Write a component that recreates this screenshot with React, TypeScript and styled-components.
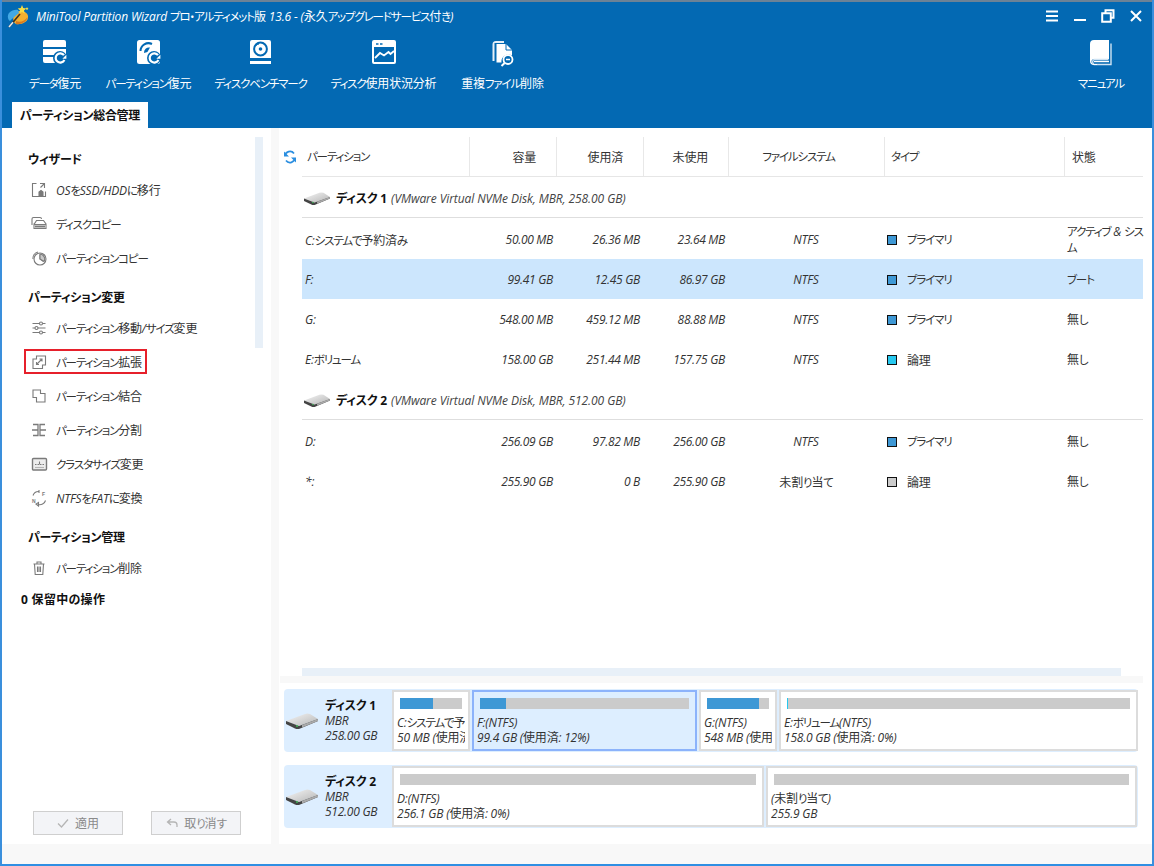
import React from "react";
import styled, { createGlobalStyle } from "styled-components";

const Global = createGlobalStyle`
  html, body { margin: 0; padding: 0; background: #fff; }
  * { box-sizing: border-box; }
  body {
    font-family: "Open Sans", "Noto Sans CJK JP", sans-serif;
    font-size: 12px;
    font-feature-settings: "palt";
    color: #222;
  }
`;

const Window = styled.div`
  width: 1154px; height: 866px; display: flex; flex-direction: column;
  border-left: 2px solid #3a8fdc; border-right: 2px solid #3a8fdc; border-bottom: 2px solid #2f8fe3;
  overflow: hidden; background: #fff;
`;
const Header = styled.header`
  height: 128px; background: #0369b3; color: #fff; display: flex; flex-direction: column;
  border-top: 2px solid #6c8296; flex: none;
`;
const TitleBar = styled.div`
  height: 28px; display: flex; align-items: center; padding: 0 9px 0 5px; gap: 7px;
`;
const TitleText = styled.span`flex: 1; letter-spacing: -0.15px;`;
const Controls = styled.div`display: flex; gap: 14px; align-items: center;`;
const Toolbar = styled.div`
  height: 72px; display: flex; padding-left: 26px; gap: 24px; align-items: flex-start;
`;
const Tool = styled.div<{ $w: number; $push?: boolean }>`
  width: ${p => p.$w}px; flex: none; display: flex; flex-direction: column; align-items: center;
  padding-top: 10px; white-space: nowrap;
  ${p => p.$push ? "margin-left: auto; margin-right: 28px;" : ""}
`;
const ToolIcon = styled.div`height: 27px; display: flex; align-items: flex-start; justify-content: center;`;
const ToolLabel = styled.span`line-height: 16px; margin-top: 9px; letter-spacing: -0.2px;`;
const TabStrip = styled.div`flex: 1; padding-left: 10px; display: flex; align-items: flex-end;`;
const Tab = styled.div`
  width: 136px; height: 26px; background: #fff; color: #111; font-weight: 700;
  display: flex; align-items: center; justify-content: center; letter-spacing: -0.3px;
`;

const Body = styled.div`flex: 1; display: flex; min-height: 0;`;
const Sidebar = styled.aside`
  width: 269px; flex: none; position: relative; display: flex; flex-direction: column;
  padding: 17px 0 9px;
`;
const SideScroll = styled.div`
  position: absolute; left: 253px; top: 9px; width: 8px; height: 211px; background: #e8f0f8;
`;
const SideHeading = styled.div`
  height: 28px; margin-left: 26px; display: flex; align-items: center; font-weight: 700; color: #111;
  letter-spacing: -0.3px;
  & ~ & { margin-top: 8px; }
`;
const SideItem = styled.div`
  height: 34px; display: flex; align-items: center; padding-left: 28px; gap: 8px;
  color: #333; letter-spacing: -0.2px; position: relative;
`;
const Highlight = styled.div`
  position: absolute; left: 22px; top: 4px; width: 123px; height: 25px; border: 2px solid #e6202b;
`;
const Pending = styled.div`
  height: 28px; margin-left: 19px; display: flex; align-items: center; font-weight: 700; color: #111;
  letter-spacing: 0.3px;
`;
const Actions = styled.div`margin-top: auto; display: flex; gap: 28px; padding-left: 31px;`;
const ActionButton = styled.div`
  width: 90px; height: 24px; background: #f3f4f7; border: 1px solid #cfcfcf; color: #8a8a8a;
  display: flex; align-items: center; justify-content: center; gap: 6px;
`;
const Gutter = styled.div`width: 8px; flex: none; background: #f8f8f8;`;

const Panel = styled.main`flex: 1; display: flex; flex-direction: column; padding-top: 9px; min-width: 0;`;
const HeadRow = styled.div`display: flex; height: 40px; flex: none;`;
const RefreshCell = styled.div`width: 23px; display: flex; align-items: center; padding-left: 4px; flex: none;`;
const COLS = "167px 87px 87px 85px 156px 180px 79px";
const HeadGrid = styled.div`
  display: grid; grid-template-columns: 168px 87px 87px 85px 156px 180px 78px; width: 841px;
  border-bottom: 1px solid #e6e6e6;
`;
const HeadCell = styled.div<{ $align?: string; $pad?: string; $last?: boolean }>`
  display: flex; align-items: center; justify-content: ${p => p.$align || "flex-start"};
  padding: ${p => p.$pad || "0"};
  border-right: ${p => p.$last ? "none" : "1px solid #e8e8e8"}; color: #333; letter-spacing: -0.2px;
`;
const Rows = styled.div`margin-left: 23px; width: 841px; flex: 1;`;
const DiskRow = styled.div`
  height: 41px; display: flex; align-items: center; padding: 2px 0 0 2px; gap: 6px;
  border-bottom: 1px solid #dedede;
`;
const DiskName = styled.b`color: #111; letter-spacing: -0.2px;`;
const DiskInfo = styled.i`color: #444; letter-spacing: -0.08px; margin-left: 1px;`;
const Row = styled.div<{ $sel?: boolean; $first?: boolean }>`
  height: 40px; display: grid; grid-template-columns: ${COLS}; align-items: center;
  background: ${p => p.$sel ? "#cce6fd" : "transparent"};
  margin-top: ${p => p.$first ? "1px" : "0"};
`;
const NameCell = styled.div`padding: 1px 0 0 3px; color: #333; letter-spacing: -0.2px;`;
const NumCell = styled.div`padding-top: 1px; text-align: right; padding-right: 3px; font-style: italic; color: #333; letter-spacing: -0.3px;`;
const FsCell = styled.div`padding-top: 1px; text-align: center; color: #333; letter-spacing: -0.2px;`;
const TypeCell = styled.div`padding-top: 1px; display: flex; align-items: center; gap: 10px; padding-left: 3px; color: #333; letter-spacing: -0.2px;`;
const Swatch = styled.span<{ $c: string }>`
  width: 10px; height: 10px; background: ${p => p.$c}; border: 1px solid #111; flex: none;
`;
const StatusCell = styled.div`
  padding: 1px 0 0 3px; line-height: 16px; color: #333; letter-spacing: -0.2px; width: 79px;
  white-space: pre-line;
`;

const HScroll = styled.div`height: 8px; margin-left: 23px; width: 819px; background: #e8f0f8; flex: none;`;
const Band = styled.div`height: 7px; margin-left: 1px; width: 863px; background: #f8f8f8; flex: none;`;
const DiskMap = styled.div`
  display: flex; flex-direction: column; gap: 13px; padding: 6px 0 16px 5px; flex: none;
`;
const MapRow = styled.div`
  width: 854px; height: 63px; display: flex; background: #ddeeff; border-radius: 4px; padding: 1px 0;
  gap: 2px;
`;
const MapLabel = styled.div`
  width: 108px; margin-right: -2px; display: flex; align-items: center; flex: none; padding-left: 2px; gap: 7px;
`;
const MapText = styled.div`display: flex; flex-direction: column; line-height: 15px;`;
const MapItalic = styled.i`color: #333; letter-spacing: -0.25px;`;
const Part = styled.div<{ $w: number; $sel?: boolean }>`
  width: ${p => p.$w}px; flex: none; background: ${p => p.$sel ? "#ddeeff" : "#fff"};
  border: 2px solid ${p => p.$sel ? "#8cb3fb" : "#dcdcdc"}; padding: 6px 3px 0; overflow: hidden;
`;
const Bar = styled.div`height: 11px; margin: 0 3px 6px; background: #cbcbcb; display: flex;`;
const Used = styled.div<{ $c?: string }>`background: ${p => p.$c || "#3e98d5"};`;
const PartLine = styled.div`
  line-height: 15px; white-space: nowrap; overflow: hidden; color: #333; letter-spacing: -0.2px;
`;
const BottomBand = styled.div`height: 20px; background: #f8f8f8; flex: none;`;

const Ico = styled.svg`flex: none; display: block;`;
const Kana = styled.span`font-size: 11.5px; letter-spacing: -1.15px;`;
const Latin = styled.i``;

const JText = ({ children }: { children: string }) => (
  <>
    {children.split(/([\u3040-\u30ff]+|[\x21-\x7e]+(?: [\x21-\x7e]+)*)/).filter(Boolean).map((s, i) =>
      /^[\u3040-\u30ff]/.test(s) ? <Kana key={i}>{s}</Kana>
        : /^[\x21-\x7e]/.test(s) ? <Latin key={i}>{s}</Latin>
        : <span key={i}>{s}</span>
    )}
  </>
);

const Logo = () => (
  <Ico width="22" height="24" viewBox="0 0 22 24">
    <path d="M8 8 C13 6 20 7 21 12 C22 18 14 21 9 20 C6 19 5 12 8 8Z" fill="#f4b02f" />
    <path d="M9 17 C13 19 18 17 20.500 13 C20 18 13 21 9 20z" fill="#d9791f" />
    <path d="M1 14 C0 9 5 5 11 6 L12 9 C8 12 5 15 3 17 C2 16.500 1.300 15.500 1 14Z" fill="#42a8e4" />
    <path d="M2 23 L13 10" stroke="#40301c" strokeWidth="1.600" />
    <path d="M2 23 L6 18.300" stroke="#e8e8e8" strokeWidth="1.600" />
    <path d="M15 1l1.200 3 3.100.4-2.300 2 .7 3.100-2.700-1.600-2.700 1.600.7-3.100-2.300-2 3.100-.4z" fill="#f7dc45" />
    <path d="M20 3l.5 1 1 .3-.8.7.2 1-.9-.5-.9.5.2-1-.8-.7 1-.3z" fill="#f7dc45" />
  </Ico>
);

const CtlMenu = () => <Ico width="14" height="12" viewBox="0 0 14 12"><path d="M1 1.500h12M1 6h12M1 10.500h12" stroke="#fff" strokeWidth="2" /></Ico>;
const CtlMin = () => <Ico width="14" height="12" viewBox="0 0 14 12"><path d="M1 10h12" stroke="#fff" strokeWidth="2" /></Ico>;
const CtlMax = () => <Ico width="14" height="14" viewBox="0 0 14 14"><path d="M4.500 3.500V1.200h8v7.600h-2.400M1.200 4.200h8.600v8.600H1.200z" fill="none" stroke="#fff" strokeWidth="2" /></Ico>;
const CtlClose = () => <Ico width="14" height="14" viewBox="0 0 14 14"><path d="M2 2l10 10M12 2L2 12" stroke="#fff" strokeWidth="2" /></Ico>;

const Recover = ({ x, y }: { x: number; y: number }) => (
  <g transform={`translate(${x} ${y})`}>
    <circle r="7" fill="#0369b3" />
    <path d="M4 -2.800 A4.600 4.600 0 1 0 4.400 2" fill="none" stroke="#fff" strokeWidth="2.200" />
    <path d="M6.400 -3.200v4h-4z" fill="#fff" />
  </g>
);
const ToolData = () => (
  <Ico width="24" height="25" viewBox="0 0 24 25">
    <path d="M2 0h19a2 2 0 0 1 2 2v5H0V2a2 2 0 0 1 2-2zM0 9h23v6H0zM0 17h14v6H2a2 2 0 0 1-2-2z" fill="#fff" />
    <Recover x={17} y={18} />
  </Ico>
);
const ToolPart = () => (
  <Ico width="24" height="25" viewBox="0 0 24 25">
    <rect x="0" y="0" width="23" height="24" rx="2.500" fill="#fff" />
    <path d="M3.500 11 A8 8 0 0 1 15 4" fill="none" stroke="#0369b3" strokeWidth="2" />
    <path d="M7 13 A5 5 0 0 1 13 7.600 L10.400 12z" fill="#0369b3" />
    <Recover x={17} y={18} />
  </Ico>
);
const ToolBench = () => (
  <Ico width="24" height="25" viewBox="0 0 24 25">
    <path d="M3 0h17a2 2 0 0 1 2 2v16H1V2a2 2 0 0 1 2-2zM1 21h21v3H1z" fill="#fff" />
    <circle cx="11.500" cy="9" r="6.400" fill="none" stroke="#0369b3" strokeWidth="2" />
    <circle cx="11.500" cy="9" r="1.800" fill="#0369b3" />
    <path d="M7 5.500 A5 5 0 0 1 10 4" stroke="#0369b3" strokeWidth="1" fill="none" />
  </Ico>
);
const ToolUsage = () => (
  <Ico width="24" height="24" viewBox="0 0 24 24">
    <rect x="1" y="1" width="22" height="22" rx="1" fill="none" stroke="#fff" strokeWidth="2" />
    <path d="M1 1h22v6H1z" fill="#fff" />
    <path d="M4 4h2.500M8 4h2.500" stroke="#0369b3" strokeWidth="1.600" />
    <path d="M3 18 L8 13 L12 15.500 L16.500 12 L18.500 14 L22 11" fill="none" stroke="#fff" strokeWidth="1.800" />
  </Ico>
);
const ToolDup = () => (
  <Ico width="24" height="27" viewBox="0 0 24 27">
    <path d="M3.500 3V21H1.500V4.500A3.500 3.500 0 0 1 5 1H13V3z" fill="#fff" opacity=".9" />
    <path d="M5.500 4h9.500l6 6v5.500a7 7 0 0 0-10.500 7H5.500z" fill="#fff" />
    <path d="M15 4v6h6" fill="none" stroke="#0369b3" strokeWidth="1" />
    <circle cx="17" cy="19.500" r="4.500" fill="none" stroke="#fff" strokeWidth="1.800" />
    <path d="M15 19.500h4" stroke="#fff" strokeWidth="1.500" />
    <path d="M13.600 23L10.500 26" stroke="#fff" strokeWidth="2" />
  </Ico>
);
const ToolBook = () => (
  <Ico width="23" height="26" viewBox="0 0 23 26">
    <path d="M4 0h15v19H4a4 4 0 0 0-4 2V4a4 4 0 0 1 4-4z" fill="#fff" />
    <path d="M21 3.500V24.500H4A3 3 0 0 1 4 19.500H18.500" fill="none" stroke="#cfe3f3" strokeWidth="1.400" />
    <path d="M0 21a4 4 0 0 0 4 4h3v-1H4a2.500 2.500 0 0 1 0-5H0z" fill="#fff" />
    <path d="M4 21.500h15" stroke="#fff" strokeWidth="1.400" />
  </Ico>
);

const sideProps = { width: 18, height: 18, viewBox: "0 0 18 18", fill: "none", stroke: "#7a7a7a", strokeWidth: 1.100 };
const IcoOs = () => <Ico {...sideProps}><path d="M6.500 2.500H2.500v13h13v-5" /><path d="M10 2.500h4.500V7M14.500 2.500L10.500 6.500" /><path d="M9 15v-4l2-1.500 2 1.500v4zM10.500 12h.5M12 12h.5" fill="#7a7a7a" /></Ico>;
const IcoDiskCopy = () => <Ico {...sideProps}><path d="M2 10V4a1.500 1.500 0 0 1 1.500-1.500H10a1.500 1.500 0 0 1 1.500 1.500" /><path d="M5 8l1.500-2.500h7L16 9v4.500H4V9zM4 9.500h12" /><path d="M5 11.500h10" strokeWidth="2" /></Ico>;
const IcoPartCopy = () => <Ico {...sideProps}><circle cx="10" cy="10" r="6" /><path d="M10 5.500V10l3.500 2.500" /><path d="M3 10a6.500 6.500 0 0 1 5-7" /><path d="M10 5a5 5 0 0 1 4 7.500l-4-2.500z" fill="#c9c9c9" /></Ico>;
const IcoSliders = () => <Ico {...sideProps}><path d="M2.500 4.500h13M2.500 9h13M2.500 13.500h13" /><circle cx="11" cy="4.500" r="1.500" fill="#fff" /><circle cx="6.500" cy="9" r="1.500" fill="#fff" /><circle cx="11" cy="13.500" r="1.500" fill="#fff" /></Ico>;
const IcoExtend = () => <Ico {...sideProps}><path d="M6.500 3h9v9h-3v3.500H3v-9.500h3.500z" /><path d="M6.500 11.500L12 6M9.500 6H12v2.500M6.500 9v2.500H9" /></Ico>;
const IcoMerge = () => <Ico {...sideProps}><path d="M3 3h7.500v3.500H15V15H6.500v-4.500H3z" /></Ico>;
const IcoSplit = () => <Ico {...sideProps}><path d="M3 3.500h5v11H3M15 3.500h-5v11h5M2 9h6M10 9h6" strokeWidth="1.300" /></Ico>;
const IcoCluster = () => <Ico {...sideProps}><rect x="2.500" y="3.500" width="14" height="11.500" rx="1" fill="#ededed" strokeWidth="1.400" /><path d="M5 9.500h9" strokeDasharray="1.500 1" /><path d="M5 12.500h9" stroke="#b5b5b5" /><path d="M9.500 6.500v3" /></Ico>;
const IcoConvert = () => (
  <Ico {...sideProps}>
    <path d="M3 6.500A6 6 0 0 1 9 2.500M15.500 11.500A6 6 0 0 1 8 15.500" />
    <path d="M9 1v3M6 15l2.500 2v-3.500z" />
    <text x="12" y="7" fontSize="5" fontWeight="700" fill="#7a7a7a" stroke="none" fontFamily="Liberation Sans">F</text>
    <text x="2" y="14" fontSize="5" fontWeight="700" fill="#7a7a7a" stroke="none" fontFamily="Liberation Sans">N</text>
  </Ico>
);
const IcoTrash = () => <Ico {...sideProps}><path d="M3.500 5h11M7 5V3h4v2M4.500 5l.7 10.500h7.600L13.500 5" /><path d="M7.500 7.500v5.500M10.500 7.500v5.500M9 7.500v5.500" /></Ico>;

const Refresh = () => (
  <Ico width="14" height="14" viewBox="0 0 14 14" fill="none" stroke="#2a8ee0" strokeWidth="1.700">
    <path d="M2 6A5 5 0 0 1 11 3.500M12 8A5 5 0 0 1 3 10.500" />
    <path d="M1 1.500v5h5zM13 12.500v-5H8z" fill="#2a8ee0" stroke="none" />
  </Ico>
);

const DiskGlyph = ({ w }: { w: number }) => (
  <Ico width={w} height={w / 2} viewBox="0 0 32 16">
    <defs>
      <linearGradient id="slab" x1="0" y1="0" x2="1" y2="1">
        <stop offset="0" stopColor="#f6f6f6" />
        <stop offset="1" stopColor="#b5b5b5" />
      </linearGradient>
    </defs>
    <path d="M0 8 L19 1 Q21 0 24 1 L32 6 L13 13z" fill="url(#slab)" />
    <path d="M0 8 L13 13 L32 6 V8 L13 16 Q11 16.500 9 15.500 L0 11z" fill="#444" />
    <path d="M16 14.500 L32 8 V6 L16 12z" fill="#aaa" />
    <circle cx="11" cy="13" r="0.900" fill="#3fbf5a" />
  </Ico>
);

const Check = () => <Ico width="12" height="12" viewBox="0 0 12 12" fill="none" stroke="#b5b5b5" strokeWidth="1.300"><path d="M1 6.500L4.500 10 11 2.500" /></Ico>;
const Back = () => <Ico width="12" height="12" viewBox="0 0 12 12" fill="none" stroke="#b5b5b5" strokeWidth="1.300"><path d="M5 2L1.500 5 5 8M1.500 5H8a3 3 0 0 1 3 3v2" /></Ico>;

const tools = [
  { w: 54, label: "データ復元", icon: <ToolData /> },
  { w: 85, label: "パーティション復元", icon: <ToolPart /> },
  { w: 91, label: "ディスクベンチマーク", icon: <ToolBench /> },
  { w: 107, label: "ディスク使用状況分析", icon: <ToolUsage /> },
  { w: 83, label: "重複ファイル削除", icon: <ToolDup /> },
];

type Item = { icon: React.ReactNode; label: string; mark?: boolean };
const group1: Item[] = [
  { icon: <IcoOs />, label: "OSをSSD/HDDに移行" },
  { icon: <IcoDiskCopy />, label: "ディスクコピー" },
  { icon: <IcoPartCopy />, label: "パーティションコピー" },
];
const group2: Item[] = [
  { icon: <IcoSliders />, label: "パーティション移動/サイズ変更" },
  { icon: <IcoExtend />, label: "パーティション拡張", mark: true },
  { icon: <IcoMerge />, label: "パーティション結合" },
  { icon: <IcoSplit />, label: "パーティション分割" },
  { icon: <IcoCluster />, label: "クラスタサイズ変更" },
  { icon: <IcoConvert />, label: "NTFSをFATに変換" },
];
const group3: Item[] = [{ icon: <IcoTrash />, label: "パーティション削除" }];

const SideList = ({ items }: { items: Item[] }) => (
  <>
    {items.map(i => (
      <SideItem key={i.label}>
        {i.mark && <Highlight />}
        {i.icon}
        <span><JText>{i.label}</JText></span>
      </SideItem>
    ))}
  </>
);

type P = { label: string; a: string; b: string; c: string; fs: string; color: string; type: string; status: string; sel?: boolean; first?: boolean };
const disk1: P[] = [
  { label: "C:システムで予約済み", a: "50.00 MB", b: "26.36 MB", c: "23.64 MB", fs: "NTFS", color: "#3e98d5", type: "プライマリ", status: "アクティブ & シス\nム", first: true },
  { label: "F:", a: "99.41 GB", b: "12.45 GB", c: "86.97 GB", fs: "NTFS", color: "#3e98d5", type: "プライマリ", status: "ブート", sel: true },
  { label: "G:", a: "548.00 MB", b: "459.12 MB", c: "88.88 MB", fs: "NTFS", color: "#3e98d5", type: "プライマリ", status: "無し" },
  { label: "E:ボリューム", a: "158.00 GB", b: "251.44 MB", c: "157.75 GB", fs: "NTFS", color: "#27c8ef", type: "論理", status: "無し" },
];
const disk2: P[] = [
  { label: "D:", a: "256.09 GB", b: "97.82 MB", c: "256.00 GB", fs: "NTFS", color: "#3e98d5", type: "プライマリ", status: "無し", first: true },
  { label: "*:", a: "255.90 GB", b: "0 B", c: "255.90 GB", fs: "未割り当て", color: "#cbcbcb", type: "論理", status: "無し" },
];

const PartRow = ({ p }: { p: P }) => (
  <Row $sel={p.sel} $first={p.first}>
    <NameCell><JText>{p.label}</JText></NameCell>
    <NumCell>{p.a}</NumCell>
    <NumCell>{p.b}</NumCell>
    <NumCell>{p.c}</NumCell>
    <FsCell><JText>{p.fs}</JText></FsCell>
    <TypeCell><Swatch $c={p.color} /><span><JText>{p.type}</JText></span></TypeCell>
    <StatusCell><JText>{p.status}</JText></StatusCell>
  </Row>
);

type M = { w: number; used: number; color?: string; l1: string; l2: string; sel?: boolean };
const map1: M[] = [
  { w: 78, used: 53, l1: "C:システムで予約済み(NTFS)", l2: "50 MB (使用済: 52%)" },
  { w: 225, used: 12.5, l1: "F:(NTFS)", l2: "99.4 GB (使用済: 12%)", sel: true },
  { w: 78, used: 84, l1: "G:(NTFS)", l2: "548 MB (使用済: 83%)" },
  { w: 359, used: 0.3, color: "#27c8ef", l1: "E:ボリューム(NTFS)", l2: "158.0 GB (使用済: 0%)" },
];
const map2: M[] = [
  { w: 372, used: 0, l1: "D:(NTFS)", l2: "256.1 GB (使用済: 0%)" },
  { w: 371, used: 0, l1: "(未割り当て)", l2: "255.9 GB" },
];

const MapDisk = ({ name, size, parts }: { name: string; size: string; parts: M[] }) => (
  <MapRow>
    <MapLabel>
      <DiskGlyph w={32} />
      <MapText>
        <DiskName>{name}</DiskName>
        <MapItalic>MBR</MapItalic>
        <MapItalic>{size}</MapItalic>
      </MapText>
    </MapLabel>
    {parts.map(p => (
      <Part key={p.l1} $w={p.w} $sel={p.sel}>
        <Bar>{p.used > 0 && <Used $c={p.color} style={{ width: `${p.used}%` }} />}</Bar>
        <PartLine><JText>{p.l1}</JText></PartLine>
        <PartLine><JText>{p.l2}</JText></PartLine>
      </Part>
    ))}
  </MapRow>
);

const heads: { t: string; align?: string; pad: string; last?: boolean }[] = [
  { t: "パーティション", pad: "0 0 0 5px" },
  { t: "容量", align: "flex-end", pad: "0 20px 0 0" },
  { t: "使用済", align: "flex-end", pad: "0 20px 0 0" },
  { t: "未使用", align: "flex-end", pad: "0 20px 0 0" },
  { t: "ファイルシステム", align: "center", pad: "0 16px 0 0" },
  { t: "タイプ", pad: "0 0 0 6px" },
  { t: "状態", pad: "0 0 0 7px", last: true },
];

export default function App() {
  return (
    <>
      <Global />
      <Window>
        <Header>
          <TitleBar>
            <Logo />
            <TitleText><JText>MiniTool Partition Wizard プロ・アルティメット版 13.6 - (永久アップグレードサービス付き)</JText></TitleText>
            <Controls><CtlMenu /><CtlMin /><CtlMax /><CtlClose /></Controls>
          </TitleBar>
          <Toolbar>
            {tools.map(t => (
              <Tool key={t.label} $w={t.w}><ToolIcon>{t.icon}</ToolIcon><ToolLabel><JText>{t.label}</JText></ToolLabel></Tool>
            ))}
            <Tool $w={46} $push><ToolIcon><ToolBook /></ToolIcon><ToolLabel><JText>マニュアル</JText></ToolLabel></Tool>
          </Toolbar>
          <TabStrip><Tab>パーティション総合管理</Tab></TabStrip>
        </Header>
        <Body>
          <Sidebar>
            <SideScroll />
            <SideHeading>ウィザード</SideHeading>
            <SideList items={group1} />
            <SideHeading>パーティション変更</SideHeading>
            <SideList items={group2} />
            <SideHeading>パーティション管理</SideHeading>
            <SideList items={group3} />
            <Pending>0 保留中の操作</Pending>
            <Actions>
              <ActionButton><Check />適用</ActionButton>
              <ActionButton><Back /><span><JText>取り消す</JText></span></ActionButton>
            </Actions>
          </Sidebar>
          <Gutter />
          <Panel>
            <HeadRow>
              <RefreshCell><Refresh /></RefreshCell>
              <HeadGrid>
                {heads.map(h => (
                  <HeadCell key={h.t} $align={h.align} $pad={h.pad} $last={h.last}><span><JText>{h.t}</JText></span></HeadCell>
                ))}
              </HeadGrid>
            </HeadRow>
            <Rows>
              <DiskRow><DiskGlyph w={26} /><span><DiskName>ディスク 1</DiskName> <DiskInfo>(VMware Virtual NVMe Disk, MBR, 258.00 GB)</DiskInfo></span></DiskRow>
              {disk1.map(p => <PartRow key={p.label} p={p} />)}
              <DiskRow><DiskGlyph w={26} /><span><DiskName>ディスク 2</DiskName> <DiskInfo>(VMware Virtual NVMe Disk, MBR, 512.00 GB)</DiskInfo></span></DiskRow>
              {disk2.map(p => <PartRow key={p.label} p={p} />)}
            </Rows>
            <HScroll />
            <Band />
            <DiskMap>
              <MapDisk name="ディスク 1" size="258.00 GB" parts={map1} />
              <MapDisk name="ディスク 2" size="512.00 GB" parts={map2} />
            </DiskMap>
          </Panel>
        </Body>
        <BottomBand />
      </Window>
    </>
  );
}
